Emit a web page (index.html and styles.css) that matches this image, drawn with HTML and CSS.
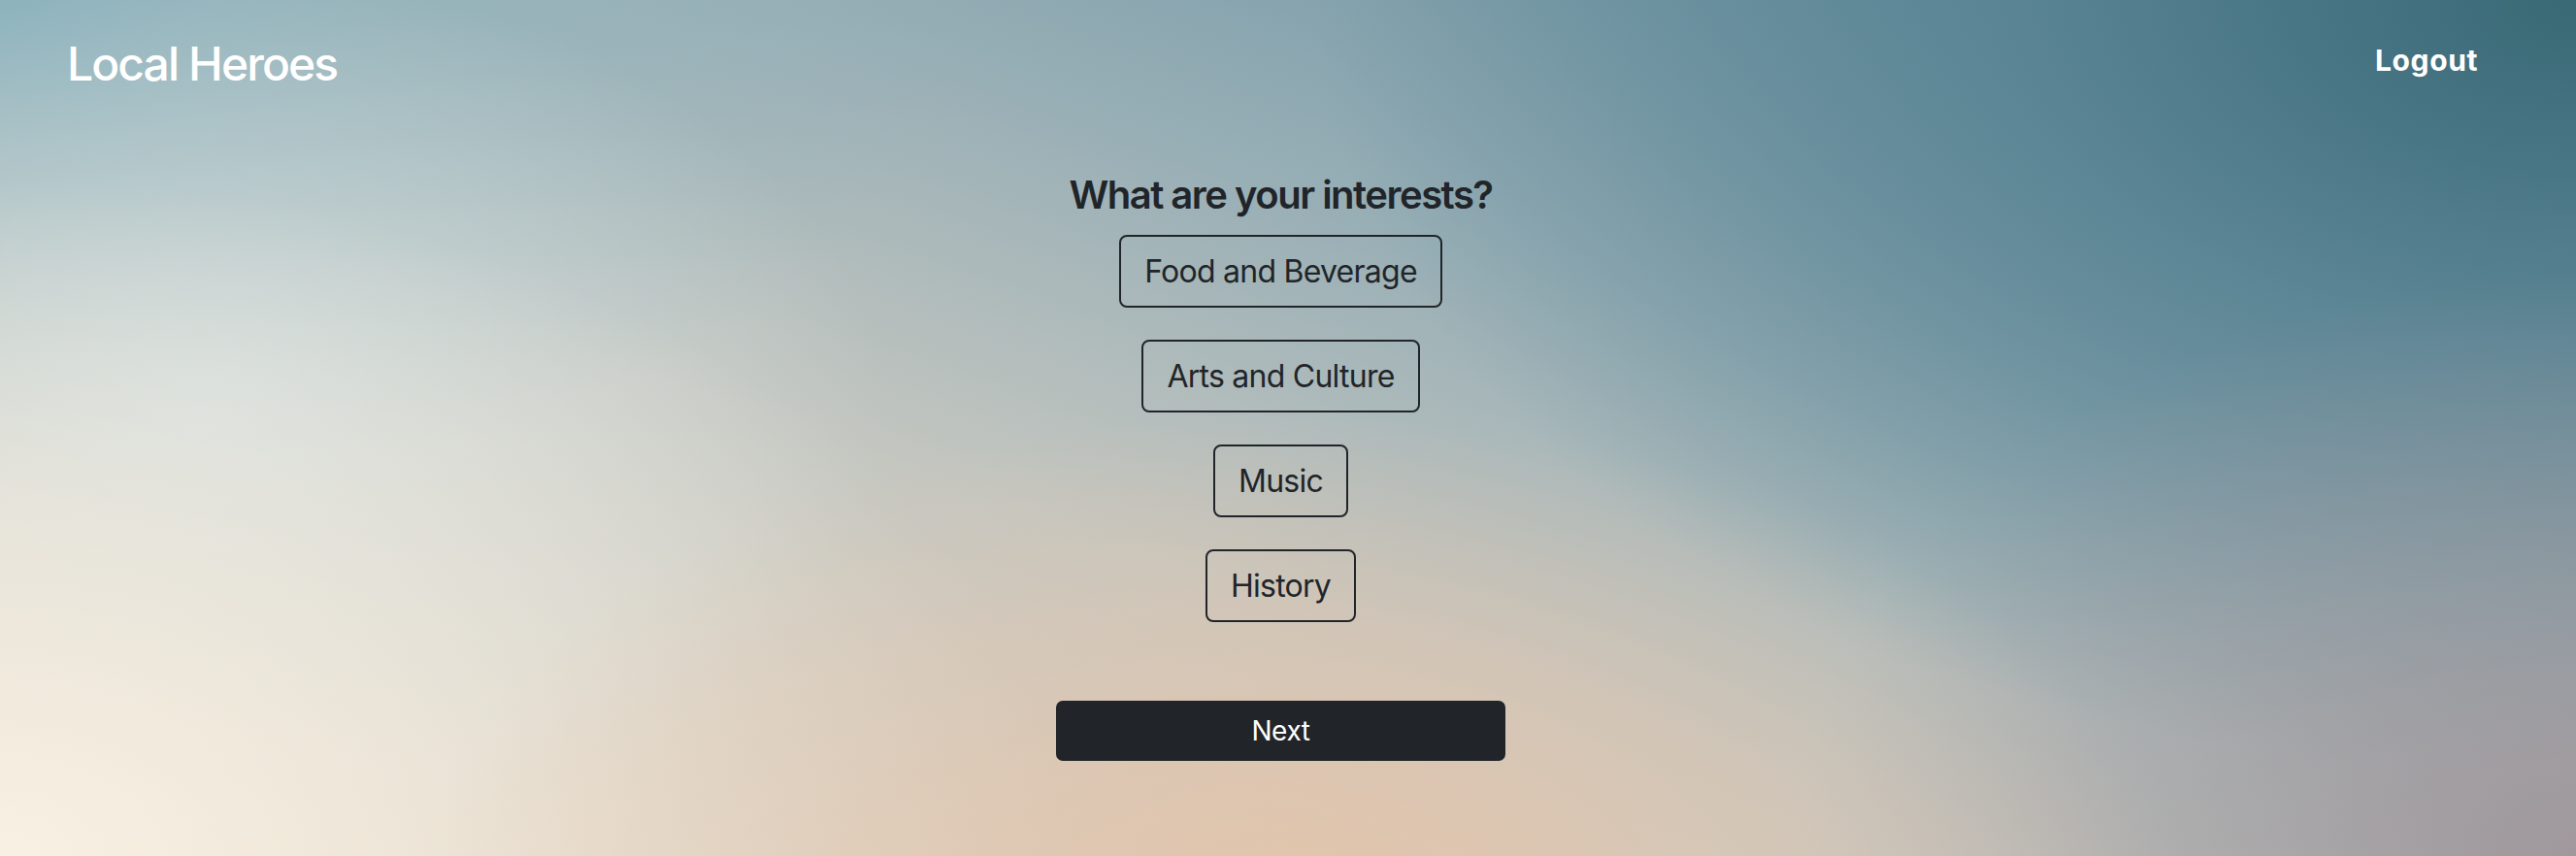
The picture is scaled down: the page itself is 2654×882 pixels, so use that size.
FILE: index.html
```html
<!DOCTYPE html>
<html lang="en">
<head>
<meta charset="utf-8">
<title>Local Heroes</title>
<link rel="stylesheet" href="styles.css">
</head>
<body>
<div class="page">
  <header class="topbar">
    <a class="brand" href="#">Local Heroes</a>
    <a class="logout" href="#">Logout</a>
  </header>
  <main class="content">
    <h1 class="title">What are your interests?</h1>
    <div class="choices">
      <button class="choice" type="button">Food and Beverage</button>
      <button class="choice" type="button">Arts and Culture</button>
      <button class="choice" type="button">Music</button>
      <button class="choice" type="button">History</button>
    </div>
    <button class="next" type="button">Next</button>
  </main>
</div>
</body>
</html>
```

FILE: styles.css
```css
html, body {
  margin: 0;
  padding: 0;
  height: 100%;
}

body {
  font-family: Inter, "Noto Sans", "Liberation Sans", sans-serif;
  color: #212529;
  background-color: #b9c1c0;
  background-image:
    radial-gradient(ellipse 900px 500px at 50% 105%, rgba(228, 196, 170, 0.95) 0%, rgba(228, 196, 170, 0) 100%),
    radial-gradient(ellipse 800px 600px at 100% 100%, rgba(160, 152, 156, 1) 0%, rgba(160, 152, 156, 0) 100%),
    radial-gradient(ellipse 1100px 700px at 0% 100%, rgba(248, 240, 226, 1) 0%, rgba(248, 240, 226, 0) 100%),
    radial-gradient(ellipse 700px 450px at 8% 48%, rgba(214, 224, 224, 0.85) 0%, rgba(214, 224, 224, 0) 100%),
    radial-gradient(ellipse 1000px 520px at 0% 0%, rgba(140, 178, 189, 1) 0%, rgba(140, 178, 189, 0) 100%),
    radial-gradient(ellipse 1300px 800px at 100% 0%, rgba(58, 105, 118, 1) 0%, rgba(84, 128, 145, 0.8) 45%, rgba(100, 140, 156, 0) 100%),
    linear-gradient(200deg, #5e8a9a 0%, #95adb5 35%, #c4c6c0 60%, #e4d8c8 100%);
}

.page {
  min-height: 882px;
  margin-right: 15px;
  display: flex;
  flex-direction: column;
}

.topbar {
  display: flex;
  justify-content: space-between;
  align-items: flex-start;
  padding: 37px 86px 0 69px;
}

.brand {
  font-size: 48px;
  line-height: 58px;
  font-weight: 500;
  color: #ffffff;
  text-decoration: none;
  letter-spacing: -1.9px;
}

.logout {
  margin-top: 7px;
  font-size: 30px;
  line-height: 36px;
  font-weight: 700;
  color: #ffffff;
  text-decoration: none;
  letter-spacing: 0.6px;
}

.content {
  display: flex;
  flex-direction: column;
  align-items: center;
  padding-top: 82px;
}

.title {
  margin: 0;
  font-size: 40px;
  line-height: 48px;
  font-weight: 600;
  color: #212529;
  letter-spacing: -1.5px;
}

.choices {
  display: flex;
  flex-direction: column;
  align-items: center;
  gap: 33px;
  margin-top: 17px;
}

.choice {
  font-family: inherit;
  font-size: 32px;
  line-height: 48px;
  font-weight: 400;
  color: #212529;
  background: transparent;
  border: 2px solid #212529;
  border-radius: 8px;
  padding: 11.5px 24px;
  letter-spacing: -0.75px;
  cursor: pointer;
}

.next {
  margin-top: 81px;
  width: 463px;
  font-family: inherit;
  font-size: 28px;
  line-height: 42px;
  font-weight: 400;
  color: #ffffff;
  background: #212529;
  border: 2px solid #212529;
  border-radius: 7px;
  padding: 8px 24px;
  letter-spacing: -0.4px;
  cursor: pointer;
}
```
